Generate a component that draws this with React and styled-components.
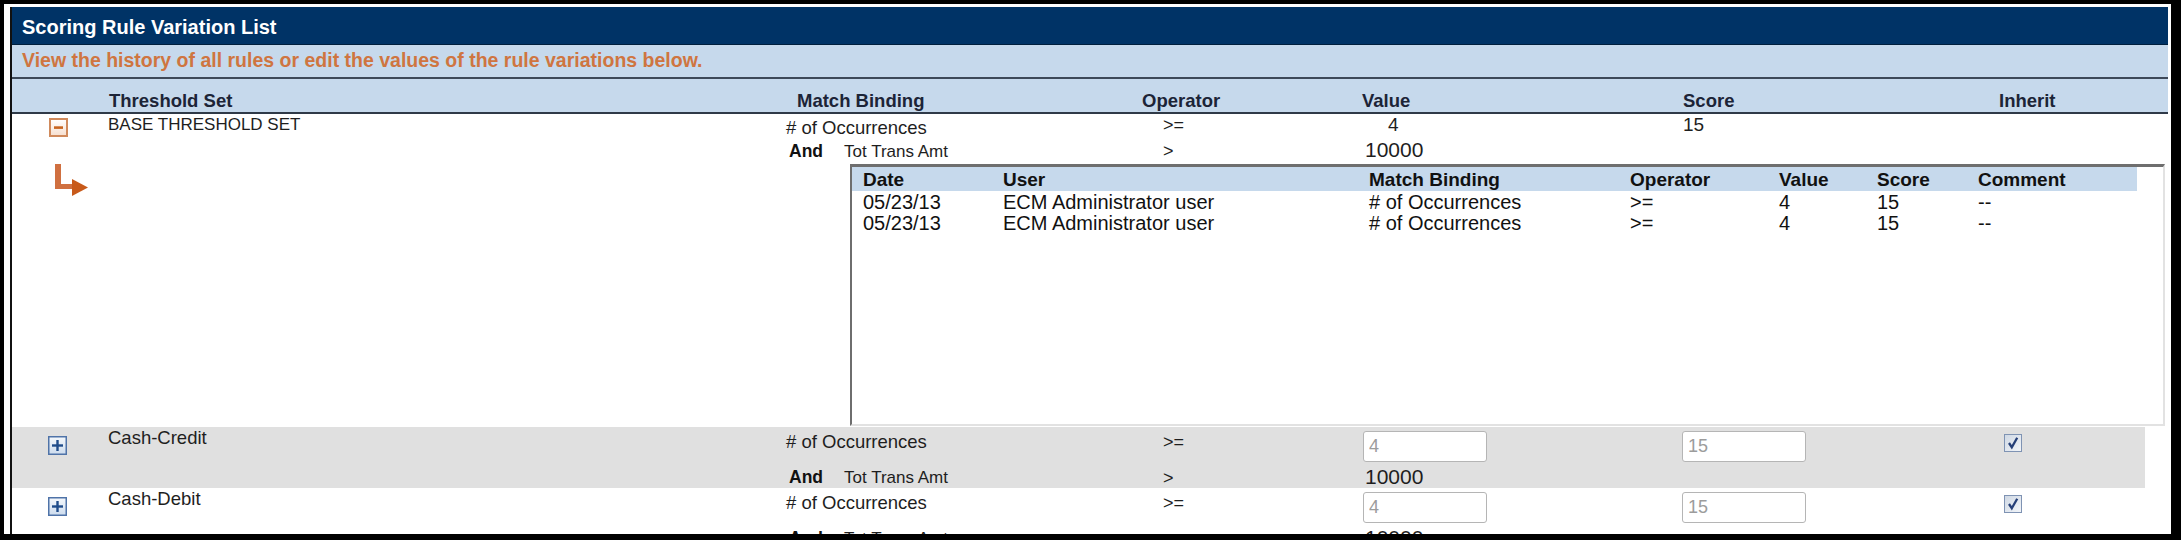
import React from 'react';
import styled, { createGlobalStyle } from 'styled-components';

const GlobalStyle = createGlobalStyle`
  html, body {
    margin: 0;
    padding: 0;
    background: #000;
  }
  * { box-sizing: border-box; }
  body {
    font-family: 'Liberation Sans', Arial, sans-serif;
    color: #1e1e1e;
  }
`;

// main table columns: expander | threshold set | match binding | operator | value | score | inherit
const COLS = '96px 678px 350px 226px 320px 317px 1fr';
// history table columns
const HCOLS = '151px 366px 261px 149px 98px 101px 159px';

const Screen = styled.div`
  width: 2181px;
  height: 540px;
  padding: 4px 10px 6px 4px;
  background: #000;
  overflow: hidden;
`;

const Frame = styled.div`
  height: 100%;
  background: #fff;
  padding: 3px 3px 0 6px;
  overflow: hidden;
`;

const Panel = styled.div`
  height: 100%;
  border-left: 2px solid #111;
  background: #fff;
  overflow: hidden;
`;

const TitleBar = styled.div`
  height: 38px;
  display: flex;
  align-items: center;
  padding: 3px 0 0 10px;
  background: #003366;
  border-bottom: 1px solid #001f3d;
  color: #fff;
  font-size: 20px;
  font-weight: 700;
`;

const SubBar = styled.div`
  height: 34px;
  display: flex;
  align-items: center;
  padding: 0 0 2px 10px;
  background: #c6d9ec;
  border-bottom: 2px solid #3d4959;
  color: #cf7540;
  font-size: 19.5px;
  font-weight: 700;
`;

const HeaderRow = styled.div`
  display: grid;
  grid-template-columns: ${COLS};
  align-items: end;
  height: 35px;
  padding-bottom: 1px;
  background: #c6d9ec;
  border-bottom: 2px solid #2f3a48;
  color: #1c2437;
  font-size: 18.5px;
  font-weight: 700;
  line-height: 21px;
`;

const HeadCell = styled.div`
  padding-left: ${p => p.$pad || 0}px;
  white-space: nowrap;
`;

const ThresholdRow = styled.div`
  display: grid;
  grid-template-columns: ${COLS};
  grid-template-rows: ${p => p.$rows};
  background: ${p => (p.$shade ? '#e0e0e0' : '#fff')};
  margin-right: ${p => (p.$shade ? '23px' : '0')};
`;

const Cell = styled.div`
  grid-row: ${p => p.$r};
  grid-column: ${p => p.$c};
  padding-left: ${p => p.$pad || 0}px;
  padding-top: ${p => p.$top || 0}px;
  font-size: ${p => p.$size || 18}px;
  line-height: ${p => p.$lh || 20}px;
  white-space: nowrap;
`;

const AndLine = styled.div`
  grid-row: 2;
  grid-column: 3;
  display: flex;
  align-items: baseline;
  gap: 21px;
  padding: 2px 0 0 3px;
  line-height: 22px;
  white-space: nowrap;
`;

const AndWord = styled.span`
  font-size: 17.5px;
  font-weight: 700;
  color: #111;
`;

const AndField = styled.span`
  font-size: 17px;
`;

const ValueInput = styled.input`
  width: 124px;
  height: 31px;
  padding: 0 5px;
  border: 1px solid #b5b5b5;
  border-radius: 3px;
  background: #fff;
  color: #9c9c9c;
  font-family: 'Liberation Sans', Arial, sans-serif;
  font-size: 18px;
  outline: none;
`;

const History = styled.div`
  grid-row: 3;
  grid-column: 3 / -1;
  height: 262px;
  margin: 0 3px 0 64px;
  border-style: solid;
  border-width: 3px 2px 2px 2px;
  border-color: #6e6e6e #e2e2e2 #e2e2e2 #6e6e6e;
  background: #fff;
`;

const HistHead = styled.div`
  display: grid;
  grid-template-columns: ${HCOLS};
  width: 1285px;
  height: 24px;
  padding-top: 2px;
  background: #c6d9ec;
  color: #111;
  font-size: 19px;
  font-weight: 700;
  line-height: 22px;
`;

const HistBody = styled.div`
  margin-top: 1px;
`;

const HistRow = styled.div`
  display: grid;
  grid-template-columns: ${HCOLS};
  font-size: 20px;
  line-height: 21px;
  color: #111;
`;

const HistCell = styled.div`
  padding-left: ${p => p.$pad || 0}px;
  white-space: nowrap;
`;

const MinusIcon = () => (
  <svg width="19" height="19" viewBox="0 0 19 19">
    <defs>
      <linearGradient id="minusFill" x1="0" y1="0" x2="0" y2="1">
        <stop offset="0" stopColor="#ffffff" />
        <stop offset="1" stopColor="#f7dfcf" />
      </linearGradient>
    </defs>
    <rect x="1" y="1" width="17" height="17" fill="url(#minusFill)" stroke="#d08a5c" strokeWidth="2" />
    <rect x="5" y="8.3" width="9" height="2.6" fill="#c8641f" />
  </svg>
);

const PlusIcon = () => (
  <svg width="19" height="19" viewBox="0 0 19 19">
    <defs>
      <linearGradient id="plusFill" x1="0" y1="0" x2="0" y2="1">
        <stop offset="0" stopColor="#f4f8fc" />
        <stop offset="1" stopColor="#cddcee" />
      </linearGradient>
    </defs>
    <rect x="0.75" y="0.75" width="17.5" height="17.5" fill="url(#plusFill)" stroke="#4f73a8" strokeWidth="1.5" />
    <rect x="4" y="8.3" width="11" height="2.4" fill="#1f4c8a" />
    <rect x="8.3" y="4" width="2.4" height="11" fill="#1f4c8a" />
  </svg>
);

const CheckBox = () => (
  <svg width="18" height="18" viewBox="0 0 18 18">
    <defs>
      <linearGradient id="boxFill" x1="0" y1="0" x2="1" y2="1">
        <stop offset="0" stopColor="#cfd8e4" />
        <stop offset="1" stopColor="#f2f5f9" />
      </linearGradient>
    </defs>
    <rect x="0.5" y="0.5" width="17" height="17" fill="url(#boxFill)" stroke="#7f93b3" />
    <path d="M5 9 L7.8 13.2 L13.2 3.8" fill="none" stroke="#253f78" strokeWidth="2.3" />
  </svg>
);

const BranchArrow = () => (
  <svg width="34" height="33" viewBox="0 0 34 33">
    <rect x="0" y="0" width="6" height="25" fill="#d07040" />
    <rect x="0" y="20" width="18" height="5" fill="#d07040" />
    <polygon points="17,15 33,23.5 17,32" fill="#c85a1a" />
  </svg>
);

const history = [
  { date: '05/23/13', user: 'ECM Administrator user', binding: '# of Occurrences', op: '>=', value: '4', score: '15', comment: '--' },
  { date: '05/23/13', user: 'ECM Administrator user', binding: '# of Occurrences', op: '>=', value: '4', score: '15', comment: '--' },
];

const thresholds = [
  { name: 'BASE THRESHOLD SET', size: 17, expanded: true, value: '4', score: '15', amount: '10000' },
  { name: 'Cash-Credit', size: 18.5, shade: true, value: '4', score: '15', amount: '10000' },
  { name: 'Cash-Debit', size: 18.5, value: '4', score: '15', amount: '10000' },
];

const HistoryTable = () => (
  <History>
    <HistHead>
      <HistCell $pad={11}>Date</HistCell>
      <HistCell>User</HistCell>
      <HistCell>Match Binding</HistCell>
      <HistCell>Operator</HistCell>
      <HistCell>Value</HistCell>
      <HistCell>Score</HistCell>
      <HistCell>Comment</HistCell>
    </HistHead>
    <HistBody>
      {history.map((h, i) => (
        <HistRow key={i}>
          <HistCell $pad={11}>{h.date}</HistCell>
          <HistCell>{h.user}</HistCell>
          <HistCell>{h.binding}</HistCell>
          <HistCell>{h.op}</HistCell>
          <HistCell>{h.value}</HistCell>
          <HistCell>{h.score}</HistCell>
          <HistCell>{h.comment}</HistCell>
        </HistRow>
      ))}
    </HistBody>
  </History>
);

const ExpandedRow = ({ t }) => (
  <ThresholdRow $rows="24px 26px 263px">
    <Cell $r={1} $c={1} $pad={37} $top={4}><MinusIcon /></Cell>
    <Cell $r={1} $c={2} $top={1} $size={t.size}>{t.name}</Cell>
    <Cell $r={1} $c={3} $top={4} $size={18.5}># of Occurrences</Cell>
    <Cell $r={1} $c={4} $pad={27} $top={1}>&gt;=</Cell>
    <Cell $r={1} $c={5} $pad={26} $top={1} $size={19}>{t.value}</Cell>
    <Cell $r={1} $c={6} $pad={1} $top={1} $size={19}>{t.score}</Cell>
    <AndLine>
      <AndWord>And</AndWord>
      <AndField>Tot Trans Amt</AndField>
    </AndLine>
    <Cell $r={2} $c={4} $pad={27} $top={2} $lh={22}>&gt;</Cell>
    <Cell $r={2} $c={5} $pad={3} $top={1} $lh={22} $size={21}>{t.amount}</Cell>
    <Cell $r={3} $c={1} $pad={43}><BranchArrow /></Cell>
    <HistoryTable />
  </ThresholdRow>
);

const CollapsedRow = ({ t }) => (
  <ThresholdRow $rows="37px 24px" $shade={t.shade}>
    <Cell $r={1} $c={1} $pad={36} $top={9}><PlusIcon /></Cell>
    <Cell $r={1} $c={2} $top={1} $size={t.size}>{t.name}</Cell>
    <Cell $r={1} $c={3} $top={5} $size={18.5}># of Occurrences</Cell>
    <Cell $r={1} $c={4} $pad={27} $top={5}>&gt;=</Cell>
    <Cell $r={1} $c={5} $pad={1} $top={4}>
      <ValueInput readOnly value={t.value} />
    </Cell>
    <Cell $r={1} $c={6} $top={4}>
      <ValueInput readOnly value={t.score} />
    </Cell>
    <Cell $r={1} $c={7} $pad={5} $top={7}><CheckBox /></Cell>
    <AndLine>
      <AndWord>And</AndWord>
      <AndField>Tot Trans Amt</AndField>
    </AndLine>
    <Cell $r={2} $c={4} $pad={27} $top={3} $lh={22}>&gt;</Cell>
    <Cell $r={2} $c={5} $pad={3} $top={2} $lh={22} $size={21}>{t.amount}</Cell>
  </ThresholdRow>
);

export default function App() {
  return (
    <>
      <GlobalStyle />
      <Screen>
        <Frame>
          <Panel>
            <TitleBar>Scoring Rule Variation List</TitleBar>
            <SubBar>View the history of all rules or edit the values of the rule variations below.</SubBar>
            <HeaderRow>
              <HeadCell />
              <HeadCell $pad={1}>Threshold Set</HeadCell>
              <HeadCell $pad={11}>Match Binding</HeadCell>
              <HeadCell $pad={6}>Operator</HeadCell>
              <HeadCell>Value</HeadCell>
              <HeadCell $pad={1}>Score</HeadCell>
              <HeadCell>Inherit</HeadCell>
            </HeaderRow>
            {thresholds.map(t =>
              t.expanded ? <ExpandedRow key={t.name} t={t} /> : <CollapsedRow key={t.name} t={t} />
            )}
          </Panel>
        </Frame>
      </Screen>
    </>
  );
}
